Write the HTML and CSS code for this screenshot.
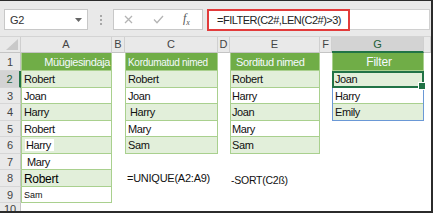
FILE: index.html
```html
<!DOCTYPE html>
<html lang="et">
<head>
    <meta charset="UTF-8">
    <title>FILTER</title>
    <link rel="stylesheet" href="styles.css">
</head>
<body>
<div class="window">
    <div class="toolbar">
        <div class="namebox">
            <span>G2</span>
            <svg width="7" height="4" viewBox="0 0 7 4"><path d="M0 0h7L3.5 4z" fill="#666"/></svg>
        </div>
        <div class="grip"><i></i><i></i><i></i></div>
        <div class="fx-buttons">
            <svg width="9" height="9" viewBox="0 0 9 9"><path d="M1 1l7 7M8 1L1 8" stroke="#b4b4b4" stroke-width="1.3" fill="none"/></svg>
            <svg width="11" height="9" viewBox="0 0 11 9"><path d="M1 4.5l3 3.2L10 1" stroke="#b4b4b4" stroke-width="1.3" fill="none"/></svg>
            <span class="fx">f<sub>x</sub></span>
        </div>
        <div class="formula">
            <span class="formula-text">=FILTER(C2#,LEN(C2#)&gt;3)</span>
        </div>
    </div>

    <div class="sheet">
        <div class="corner"><svg width="12" height="11" viewBox="0 0 12 11"><path d="M12 0v11H0z" fill="#c9c9c9"/></svg></div>
        <div class="colhead">A</div>
        <div class="colhead">B</div>
        <div class="colhead">C</div>
        <div class="colhead">D</div>
        <div class="colhead">E</div>
        <div class="colhead">F</div>
        <div class="colhead sel">G</div>
        <div class="colhead"></div>

        <div class="rowhead r1">1</div>
        <div class="rowhead r2 sel">2</div>
        <div class="rowhead r3">3</div>
        <div class="rowhead r4">4</div>
        <div class="rowhead r5">5</div>
        <div class="rowhead r6">6</div>
        <div class="rowhead r7">7</div>
        <div class="rowhead r8">8</div>
        <div class="rowhead r9">9</div>
        <div class="rowhead r10">10</div>

        <!-- A1:A9 -->
        <div class="tbl tbl-a">
            <div class="th th-right">Müügiesindaja</div>
            <div class="td">Robert</div>
            <div class="td">Joan</div>
            <div class="td">Harry</div>
            <div class="td">Robert</div>
            <div class="td ind-4"><span class="patch">Harry</span></div>
            <div class="td ind-5">Mary</div>
            <div class="td big">Robert</div>
            <div class="td small">Sam</div>
        </div>

        <!-- C1:C6 -->
        <div class="tbl tbl-c">
            <div class="th th-c">Kordumatud nimed</div>
            <div class="td">Robert</div>
            <div class="td">Joan</div>
            <div class="td ind-4">Harry</div>
            <div class="td">Mary</div>
            <div class="td">Sam</div>
        </div>

        <!-- E1:E6 -->
        <div class="tbl tbl-e">
            <div class="th th-e">Sorditud nimed</div>
            <div class="td">Robert</div>
            <div class="td">Harry</div>
            <div class="td">Joan</div>
            <div class="td">Mary</div>
            <div class="td">Sam</div>
        </div>

        <!-- G1:G4 -->
        <div class="tbl tbl-g">
            <div class="th th-center">Filter</div>
            <div class="td">Joan</div>
            <div class="td">Harry</div>
            <div class="td">Emily</div>
        </div>
        <div class="spill"></div>
        <div class="active"></div>

        <div class="note note-unique">=UNIQUE(A2:A9)</div>
        <div class="note note-sort">-SORT(C2ß)</div>
    </div>
</div>
</body>
</html>
```

FILE: styles.css
```css
* {
    margin: 0;
    padding: 0;
    box-sizing: border-box;
}

body {
    width: 433px;
    height: 213px;
    overflow: hidden;
    background: #ffffff;
    font-family: "Liberation Sans", Arial, sans-serif;
}

.window {
    width: 433px;
    height: 213px;
    border-top: 1px solid #2b2b2b;
    border-right: 2px solid #2b2b2b;
    border-bottom: 2px solid #2b2b2b;
    display: flex;
    flex-direction: column;
    overflow: hidden;
}

/* formula bar */
.toolbar {
    height: 36px;
    flex: none;
    background: #e9e9e9;
    border-bottom: 1px solid #d4d4d4;
    display: flex;
    align-items: flex-start;
    padding: 8px 1px 0 4px;
}

.namebox {
    width: 84px;
    height: 21px;
    background: #ffffff;
    border: 1px solid #c8c8c8;
    display: flex;
    align-items: center;
    justify-content: space-between;
    padding: 0 5px 0 5px;
    font-size: 11px;
    letter-spacing: -0.3px;
    color: #333333;
}

.grip {
    width: 25px;
    height: 21px;
    display: flex;
    flex-direction: column;
    align-items: center;
    justify-content: center;
    gap: 2px;
}

.grip i {
    width: 2px;
    height: 2px;
    background: #a8a8a8;
}

.fx-buttons {
    width: 90px;
    height: 21px;
    background: #ffffff;
    border: 1px solid #c8c8c8;
    display: flex;
    align-items: center;
    gap: 20px;
    padding-left: 10px;
}

.fx {
    font-family: "Liberation Serif", serif;
    font-style: italic;
    font-size: 12px;
    color: #555555;
    margin-left: -1px;
}

.fx sub {
    font-size: 8px;
}

.formula {
    flex: 1;
    height: 21px;
    margin-left: 4px;
    background: #ffffff;
    border: 1px solid #d0d0d0;
    border-left: none;
}

.formula-text {
    display: inline-block;
    height: 22px;
    margin-top: -1px;
    border: 2px solid #e23b3b;
    padding: 0 7px 0 8px;
    line-height: 18px;
    font-size: 11px;
    letter-spacing: -0.5px;
    color: #222222;
}

/* grid */
.sheet {
    flex: 1;
    display: grid;
    grid-template-columns: 21px 91px 13px 93px 12px 90px 12px 92px 1fr;
    grid-template-rows: 16px 18px repeat(8, 16.5px) 1fr;
}

.corner {
    background: #e9e9e9;
    border-right: 1px solid #cfcfcf;
    border-bottom: 1px solid #c4c4c4;
    display: flex;
    align-items: flex-end;
    justify-content: flex-end;
    padding: 0 2px 2px 0;
}

.colhead {
    background: #e9e9e9;
    border-right: 1px solid #d0d0d0;
    border-bottom: 1px solid #c4c4c4;
    font-size: 11px;
    color: #444444;
    text-align: center;
    line-height: 15px;
}

.colhead.sel {
    background: #d3d3d3;
    border-bottom: 2px solid #217346;
    color: #1d5e38;
}

.rowhead {
    grid-column: 1;
    background: #e9e9e9;
    border-right: 1px solid #c4c4c4;
    border-bottom: 1px solid #d6d6d6;
    font-size: 11px;
    color: #444444;
    text-align: center;
    line-height: 16px;
}

.rowhead.r1 { line-height: 18px; }
.rowhead.r10 { line-height: 12px; }

.rowhead.sel {
    background: #d3d3d3;
    border-right: 2px solid #217346;
    color: #1d5e38;
}

.tbl {
    align-self: start;
    border-left: 1px solid #a9d08e;
    border-right: 1px solid #a9d08e;
    display: flex;
    flex-direction: column;
}

.tbl-a { grid-column: 2; grid-row: 2 / 11; }
.tbl-c { grid-column: 4; grid-row: 2 / 8; }
.tbl-e { grid-column: 6; grid-row: 2 / 8; }
.tbl-g { grid-column: 8; grid-row: 2 / 6; }

.th {
    height: 18px;
    background: #70ad47;
    color: #f4f9ff;
    font-size: 11px;
    letter-spacing: -0.4px;
    line-height: 19px;
    padding-left: 2px;
    border-bottom: 1px solid #a9d08e;
    white-space: nowrap;
}

.th-right { text-align: right; padding-right: 1px; }
.th-c { font-size: 10px; letter-spacing: -0.3px; }
.th-e { padding-left: 5px; }
.th-center { text-align: center; font-size: 12px; letter-spacing: -0.2px; }

.td {
    height: 16.5px;
    font-size: 11px;
    letter-spacing: -0.4px;
    line-height: 17px;
    color: #111111;
    padding-left: 2px;
    border-bottom: 1px solid #a9d08e;
    white-space: nowrap;
}

.td:nth-child(even) { background: #e2efda; }

.tbl-e .td { padding-left: 1px; }

.ind-4 { padding-left: 4px; }
.ind-5 { padding-left: 5px; }
.big { font-size: 12px; letter-spacing: -0.3px; line-height: 18px; color: #000000; }
.small { font-size: 9px; letter-spacing: 0; }

.patch {
    background: #ffffff;
    padding: 0 3px 0 1px;
    margin-left: -1px;
}

.spill {
    grid-column: 8;
    grid-row: 3 / 6;
    border: 1px solid #6a98d6;
}

.active {
    grid-column: 8;
    grid-row: 3;
    border: 2px solid #217346;
    position: relative;
}

.active::after {
    content: "";
    position: absolute;
    right: -4px;
    bottom: -4px;
    width: 6px;
    height: 6px;
    background: #217346;
    border: 1px solid #ffffff;
}

.note {
    grid-row: 9;
    white-space: nowrap;
    color: #111111;
    line-height: 17px;
}

.note-unique {
    grid-column: 4 / 7;
    padding-left: 2px;
    font-size: 11px;
    letter-spacing: -0.25px;
}

.note-sort {
    grid-column: 6 / 9;
    padding-left: 1px;
    padding-top: 2px;
    font-size: 10.5px;
    letter-spacing: -0.25px;
}
```
